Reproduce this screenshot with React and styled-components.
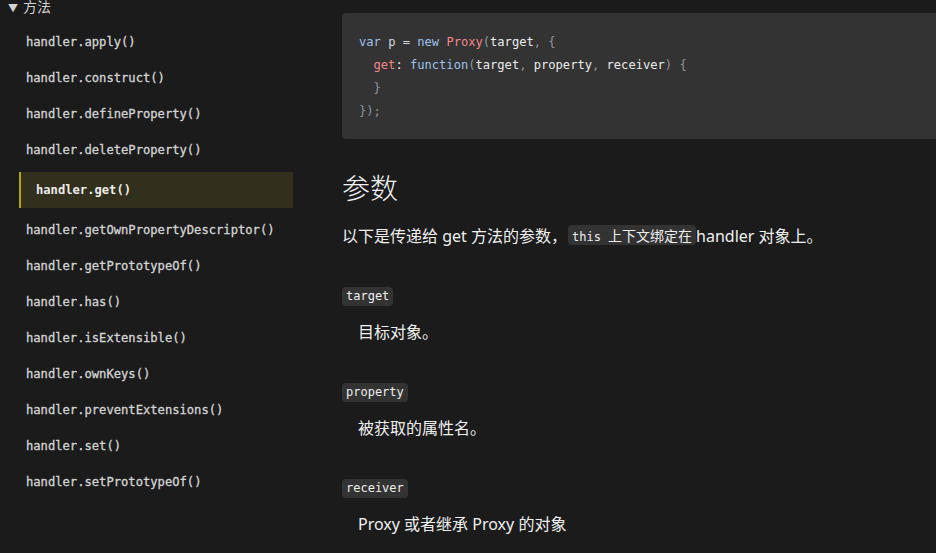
import React from 'react';
import styled, { createGlobalStyle } from 'styled-components';

const GlobalStyle = createGlobalStyle`
  html, body {
    margin: 0;
    padding: 0;
    background: #1b1b1b;
    overflow: hidden;
  }
`;

const Page = styled.div`
  display: grid;
  grid-template-columns: 342px 1fr;
  width: 936px;
  height: 553px;
  overflow: hidden;
  background: #1b1b1b;
  color: #e8e8e8;
  font-family: "Noto Sans", "Noto Sans CJK SC", sans-serif;
`;

const Sidebar = styled.nav`
  display: flex;
  flex-direction: column;
`;

const GroupTitle = styled.div`
  height: 14px;
  line-height: 14px;
  font-size: 14px;
  padding-left: 8px;
  color: #d2d2d2;
  display: flex;
  align-items: center;
  gap: 5px;

  .arrow {
    font-size: 10px;
    margin-top: 1px;
  }
`;

const MethodList = styled.ul`
  list-style: none;
  margin: 10px 0 0;
  padding: 0;
  width: 293px;
`;

const MethodItem = styled.li`
  height: 36px;
  line-height: 36px;
  font-family: "DejaVu Sans Mono", "Liberation Mono", monospace;
  font-size: 12.15px;
  -webkit-text-stroke: ${p => (p.$active ? '0' : '0.3px')} currentColor;
  color: ${p => (p.$active ? '#ececec' : '#d4d4d4')};
  font-weight: ${p => (p.$active ? 700 : 400)};
  padding-left: ${p => (p.$active ? '15px' : '26px')};
  margin: ${p => (p.$active ? '4px 0 4px 19px' : '0')};
  background: ${p => (p.$active ? '#332f1d' : 'transparent')};
  border-left: ${p => (p.$active ? '2px solid #b7a600' : 'none')};
`;

const Main = styled.main`
  display: flex;
  flex-direction: column;
  align-items: flex-start;
  min-width: 0;
`;

const CodeBlock = styled.pre`
  box-sizing: border-box;
  align-self: stretch;
  margin: 13px -20px 0 0;
  height: 126px;
  padding: 18px 17px 16px;
  background: #333333;
  border-radius: 4px;
  font-family: "DejaVu Sans Mono", "Liberation Mono", monospace;
  font-size: 12.1px;
  line-height: 23px;
  color: #8e959d;
`;

const Kw = styled.span`
  color: #9fc2ec;
`;

const Hot = styled.span`
  color: #f4868b;
`;

const Id = styled.span`
  color: #ececec;
`;

const Plain = styled.span`
  color: #d3dae3;
`;

const Heading = styled.h2`
  margin: 31px 0 0;
  font-size: 28px;
  font-weight: 300;
  line-height: 36px;
  color: #f2f2f2;
`;

const Para = styled.p`
  margin: 18px 0 0;
  font-size: 16px;
  line-height: 24px;
  color: #f0f0f0;
`;

const InlineCode = styled.code`
  display: inline-block;
  height: 20px;
  line-height: 20px;
  padding: 0 4px;
  margin: 0 0 0 1px;
  background: #333333;
  border-radius: 4px;
  font-family: "DejaVu Sans Mono", "Liberation Mono", monospace;
  font-size: 12px;
  color: #efefef;
  vertical-align: 1px;

  .cjk {
    font-family: "Noto Sans CJK SC", sans-serif;
    font-size: 14px;
  }
`;

const Term = styled.dt`
  display: flex;
  margin: 39px 0 0;
  height: 19px;
`;

const Chip = styled.code`
  display: block;
  height: 19px;
  line-height: 19px;
  padding: 0 4px;
  background: #333333;
  border-radius: 4px;
  font-family: "DejaVu Sans Mono", "Liberation Mono", monospace;
  font-size: 12px;
  color: #efefef;
`;

const Desc = styled.dd`
  margin: 14px 0 0 16px;
  font-size: 16px;
  line-height: 24px;
  color: #f0f0f0;
`;

const Params = styled.dl`
  margin: 0;
  padding: 0;
`;

const methods = [
  'apply', 'construct', 'defineProperty', 'deleteProperty', 'get',
  'getOwnPropertyDescriptor', 'getPrototypeOf', 'has', 'isExtensible',
  'ownKeys', 'preventExtensions', 'set', 'setPrototypeOf',
];

const params = [
  { name: 'target', text: '目标对象。' },
  { name: 'property', text: '被获取的属性名。' },
  { name: 'receiver', text: 'Proxy 或者继承 Proxy 的对象' },
];

export default function App() {
  return (
    <>
      <GlobalStyle />
      <Page>
        <Sidebar>
          <GroupTitle><span className="arrow">▼</span>方法</GroupTitle>
          <MethodList>
            {methods.map(m => (
              <MethodItem key={m} $active={m === 'get'}>handler.{m}()</MethodItem>
            ))}
          </MethodList>
        </Sidebar>
        <Main>
          <CodeBlock>
            <Kw>var</Kw> <Plain>p =</Plain> <Kw>new</Kw> <Hot>Proxy</Hot>(<Id>target</Id>, {'{'}{'\n'}
            {'  '}<Hot>get</Hot><Id>:</Id> <Kw>function</Kw>(<Id>target</Id>, <Id>property</Id>, <Id>receiver</Id>) {'{'}{'\n'}
            {'  }'}{'\n'}
            {'});'}
          </CodeBlock>
          <Heading>参数</Heading>
          <Para>
            以下是传递给 get 方法的参数，<InlineCode>this <span className="cjk">上下文绑定在</span></InlineCode>handler 对象上。
          </Para>
          <Params>
            {params.map(p => (
              <React.Fragment key={p.name}>
                <Term><Chip>{p.name}</Chip></Term>
                <Desc>{p.text}</Desc>
              </React.Fragment>
            ))}
          </Params>
        </Main>
      </Page>
    </>
  );
}
